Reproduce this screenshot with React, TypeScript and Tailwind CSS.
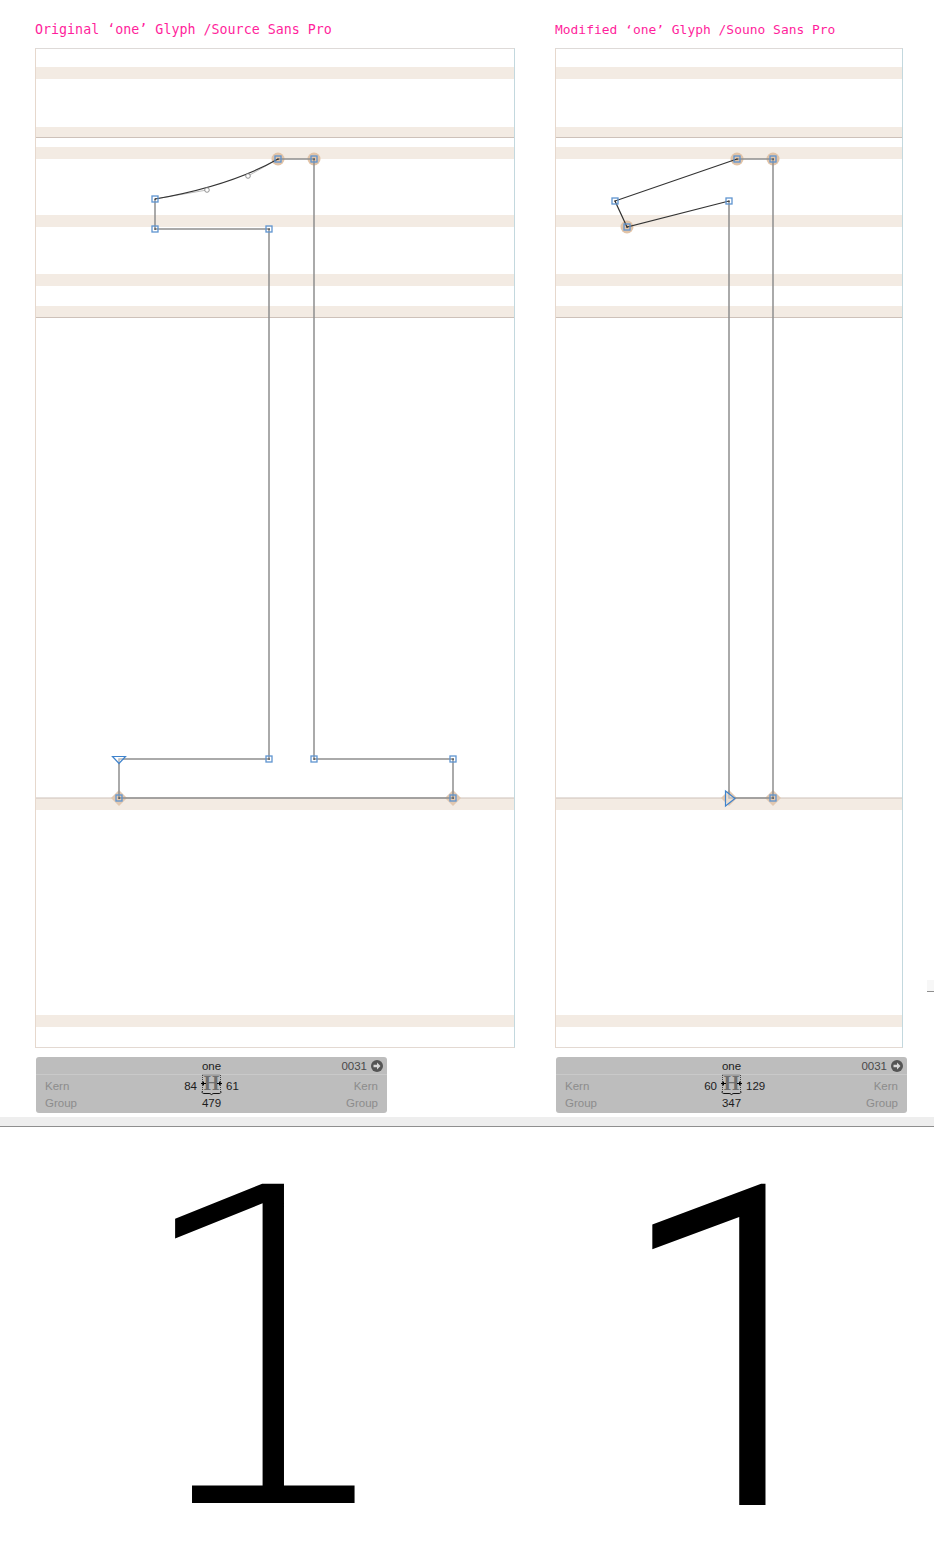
import React from "react";

const BANDS: [number, number][] = [
  [67, 12], [127, 11], [147, 12], [215, 12], [274, 12], [306, 12], [798, 12], [1015, 12],
];
const LINES = [137.5, 317.5, 798];

function Square({ x, y }: { x: number; y: number }) {
  return (
    <g>
      <rect x={x - 3} y={y - 3} width={6} height={6} fill="none" stroke="#5f94d0" strokeWidth={1.3} />
      <rect x={x - 0.5} y={y - 0.5} width={1.2} height={1.2} fill="#222" />
    </g>
  );
}
function Halo({ x, y }: { x: number; y: number }) {
  return <circle cx={x} cy={y} r={6.5} fill="#e2c4a8" />;
}
function Diamond({ x, y }: { x: number; y: number }) {
  return <polygon points={`${x - 8},${y} ${x},${y - 8} ${x + 8},${y} ${x},${y + 8}`} fill="#e2c8b0" />;
}

function Panel({ width, originX, children }: { width: string; originX: number; children: React.ReactNode }) {
  const w = originX === 36 ? 478 : 346;
  return (
    <div className={`${width} h-[1000px] border border-t-[#dedad8] border-l-[#e6d8cd] border-r-[#c3d8de] border-b-[#e3d9d2] bg-white`}>
      <svg className="block" width={w} height={998} viewBox={`${originX} 49 ${w} 998`}>
        {BANDS.map(([y, h]) => (
          <rect key={y} x={originX} y={y} width={w} height={h} fill="#f3ebe3" />
        ))}
        {LINES.map((y) => (
          <rect key={y} x={originX} y={y - 0.5} width={w} height={1} fill="#cdc1b9" />
        ))}
        {children}
      </svg>
    </div>
  );
}

function Metric() {
  return (
    <div className="relative flex h-[17px] w-[29px] justify-center">
      <svg className="mt-[-4px] overflow-visible" width={21} height={24} viewBox="0 0 21 24">
        <line x1={1.5} y1={1} x2={1.5} y2={18} stroke="#444" strokeWidth={1} strokeDasharray="1 1" />
        <line x1={19.5} y1={1} x2={19.5} y2={18} stroke="#444" strokeWidth={1} strokeDasharray="1 1" />
        <line x1={1.5} y1={1} x2={19.5} y2={1} stroke="#444" strokeWidth={1} strokeDasharray="1 1" />
        <text x={10.5} y={15.5} textAnchor="middle" fontFamily="'Liberation Serif', serif" fontWeight={700} fontSize={20} fill="#6e6e6e">H</text>
        <path d="M0 9.500h5M16 9.500h5" stroke="#000" strokeWidth={1} />
        <path d="M0 9.500l3-2.200v4.400zM21 9.500l-3-2.200v4.400z" fill="#000" />
        <path d="M1 17.500c0 2 1 2 3 2h4c1.500 0 2 .5 2.500 1.500c.5-1 1-1.500 2.500-1.500h4c2 0 3 0 3-2" fill="none" stroke="#111" strokeWidth={1} />
      </svg>
    </div>
  );
}

function InfoBar({ left, right, total }: { left: string; right: string; total: string }) {
  return (
    <div className="ml-px mt-[9px] w-[351px] text-[11.5px] leading-[16px] text-[#1c1c1c] [font-family:'Liberation_Sans',Arial,sans-serif]">
      <div className="relative h-[18px] rounded-t-[3px] border-b border-b-[#c9c9c9] bg-[#bdbdbd] pt-px text-center">
        one
        <div className="absolute right-[4px] top-px flex items-center gap-[4px] text-[#4a4a4a]">
          <span>0031</span>
          <svg width={12} height={12} viewBox="0 0 12 12">
            <circle cx={6} cy={6} r={6} fill="#555" />
            <path d="M6 2.500L9.500 6L6 9.500V7.300H2.500V4.700H6z" fill="#d8d8d8" />
          </svg>
        </div>
      </div>
      <div className="h-[38px] rounded-b-[3px] bg-[#bdbdbd] px-[9px] pt-[3px]">
        <div className="grid h-[17px] grid-cols-[1fr_29px_1fr]">
          <div className="flex justify-between">
            <span className="text-[#8c8c8c]">Kern</span>
            <span>{left}</span>
          </div>
          <Metric />
          <div className="flex justify-between">
            <span>{right}</span>
            <span className="text-[#8c8c8c]">Kern</span>
          </div>
        </div>
        <div className="flex h-[17px] justify-between">
          <span className="text-[#8c8c8c]">Group</span>
          <span>{total}</span>
          <span className="text-[#8c8c8c]">Group</span>
        </div>
      </div>
    </div>
  );
}

export default function App() {
  return (
    <div className="relative h-[1541px] w-[934px] overflow-hidden bg-white">
      <div className="flex h-[1116px] pl-[35px]">
        <section className="w-[520px]">
          <h2 className="h-[48px] pt-[21px] text-[13.33px] font-normal leading-[18px] text-[#ff1f9c] [font-family:'DejaVu_Sans_Mono',monospace]">
            Original ‘one’ Glyph /Source Sans Pro
          </h2>
          <Panel width="w-[480px]" originX={36}>
            <Halo x={278} y={159} />
            <Halo x={314} y={159} />
            <Diamond x={119} y={798} />
            <Diamond x={453} y={798} />
            <path d="M278 159H314V759H453V798H119V759H269V229H155V199" fill="none" stroke="#8f8f8f" strokeWidth={1.5} />
            <path d="M207 190L155 199M248 176L278 159" fill="none" stroke="#bdbdbd" strokeWidth={1} />
            <path d="M155 199C207 190 248 176 278 159" fill="none" stroke="#333" strokeWidth={1.2} />
            <circle cx={207} cy={190} r={2.3} fill="#fff" stroke="#777" strokeWidth={0.8} />
            <circle cx={248} cy={176} r={2.3} fill="#fff" stroke="#777" strokeWidth={0.8} />
            {[[278, 159], [314, 159], [155, 199], [155, 229], [269, 229], [269, 759], [314, 759], [453, 759], [119, 798], [453, 798]].map(([x, y]) => (
              <Square key={`${x}-${y}`} x={x} y={y} />
            ))}
            <polygon points="112.500,756.500 125.500,756.500 119,763.500" fill="#fff" fillOpacity={0.4} stroke="#3f83cc" strokeWidth={1.2} />
          </Panel>
          <InfoBar left="84" right="61" total="479" />
        </section>
        <section>
          <h2 className="h-[48px] pt-[21px] text-[12.95px] font-normal leading-[18px] text-[#ff1f9c] [font-family:'DejaVu_Sans_Mono',monospace]">
            Modified ‘one’ Glyph /Souno Sans Pro
          </h2>
          <Panel width="w-[348px]" originX={556}>
            <Halo x={737} y={159} />
            <Halo x={773} y={159} />
            <Halo x={627} y={227} />
            <Diamond x={773} y={798} />
            <Diamond x={729} y={798} />
            <path d="M737 159H773V798H729V201" fill="none" stroke="#8f8f8f" strokeWidth={1.5} />
            <path d="M729 201L627 227L615 201L737 159" fill="none" stroke="#333" strokeWidth={1.2} />
            {[[737, 159], [773, 159], [615, 201], [729, 201], [627, 227], [773, 798]].map(([x, y]) => (
              <Square key={`${x}-${y}`} x={x} y={y} />
            ))}
            <polygon points="725.500,791 725.500,806 735,798.500" fill="#fff" fillOpacity={0.4} stroke="#3f83cc" strokeWidth={1.2} />
          </Panel>
          <InfoBar left="60" right="129" total="347" />
        </section>
      </div>
      <div className="h-[11px] border-t border-b border-t-white border-b-[#8f8f8f] bg-[#eeeeee]" />
      <div className="flex h-[414px] text-black">
        <div className="ml-[127px] mt-[35px] h-[379px] w-[235px] text-center text-[438px] font-extralight leading-[379px] [font-family:'DejaVu_Sans',sans-serif]">1</div>
        <div className="ml-[251px] mt-[35px] h-[379px] w-[200px] text-center text-[450px] font-light leading-[379px] [font-family:Roboto,sans-serif]">1</div>
      </div>
      <div className="absolute left-[927px] top-[980px] h-[12px] w-[7px] border-b border-b-[#8f8f8f] bg-[#f7f7f7]" />
    </div>
  );
}
